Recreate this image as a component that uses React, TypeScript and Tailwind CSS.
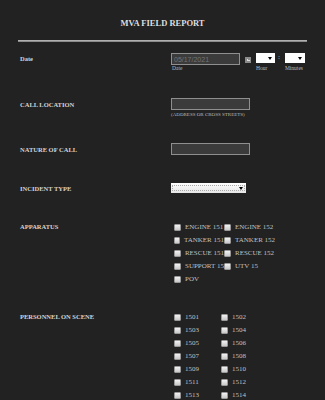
import React from "react";

const serif = { fontFamily: '"Liberation Serif", "Times New Roman", serif' };

function Check({ label, w }: { label: string; w: string }) {
  return (
    <div className={`flex items-center h-[13px] ${w}`}>
      <div className="w-[7px] h-[7px] bg-gradient-to-b from-[#f2f2f2] to-[#c9c9c9] border border-[#999] rounded-[1px]" />
      <span className="ml-[4px] text-[7px] text-[#c0c0c0] whitespace-nowrap leading-none">{label}</span>
    </div>
  );
}

function Arrow() {
  return <div className="w-0 h-0 border-l-[2px] border-r-[2px] border-t-[3px] border-l-transparent border-r-transparent border-t-black" />;
}

function Label({ children }: { children: React.ReactNode }) {
  return (
    <div className="w-[171px] shrink-0 pl-[20px] text-[6.5px] font-bold text-[#d4d4d4] leading-none">
      {children}
    </div>
  );
}

export default function App() {
  const apparatus = [
    ["ENGINE 151", "ENGINE 152"],
    ["TANKER 151", "TANKER 152"],
    ["RESCUE 151", "RESCUE 152"],
    ["SUPPORT 15", "UTV 15"],
    ["POV", ""],
  ];
  const personnel = [
    ["1501", "1502"],
    ["1503", "1504"],
    ["1505", "1506"],
    ["1507", "1508"],
    ["1509", "1510"],
    ["1511", "1512"],
    ["1513", "1514"],
  ];

  return (
    <div className="w-[325px] h-[400px] overflow-hidden bg-[#222222]" style={serif}>
      <div className="pt-[18px] text-center text-[8.5px] font-bold text-[#dedede] leading-[10px]">
        MVA FIELD REPORT
      </div>
      <div className="mx-[18px] mt-[12px] h-[2px] bg-[#8c8c8c] border-t border-[#b0b0b0]" />

      {/* Date */}
      <div className="flex mt-[11px] h-[45px]">
        <div className="w-[171px] shrink-0 pl-[20px] pt-[3px] text-[6.5px] font-bold text-[#d4d4d4] leading-none">Date</div>
        <div className="flex">
          <div className="flex flex-col">
            <div className="w-[69px] h-[12px] bg-[#3b3b3b] border border-[#8f8f8f] flex items-center pl-[2px]">
              <span className="text-[7px] text-[#737373] leading-none" style={{ fontFamily: '"Liberation Sans", Arial, sans-serif' }}>
                05/17/2021
              </span>
            </div>
            <span className="mt-[1px] ml-[1px] text-[5.5px] text-[#bdbdbd] leading-none">Date</span>
          </div>
          <div className="ml-[5px] mt-[4px] w-[6px] h-[6px] bg-[#8a8a8a] flex items-center justify-center">
            <div className="w-[3px] h-[2px] border-b border-l border-[#ddd]" />
          </div>
          <div className="flex flex-col ml-[5px]">
            <div className="w-[19px] h-[10px] bg-white flex items-center justify-end pr-[3px]">
              <Arrow />
            </div>
            <span className="mt-[3px] text-[5.5px] text-[#bdbdbd] leading-none">Hour</span>
          </div>
          <span className="mx-[3px] mt-[1px] text-[7px] text-[#bdbdbd] leading-none">:</span>
          <div className="flex flex-col ml-[2px]">
            <div className="w-[20px] h-[10px] bg-white flex items-center justify-end pr-[3px]">
              <Arrow />
            </div>
            <span className="mt-[3px] text-[5.5px] text-[#bdbdbd] leading-none">Minutes</span>
          </div>
        </div>
      </div>

      {/* Call location */}
      <div className="flex h-[45px]">
        <div className="pt-[4px]">
          <Label>CALL LOCATION</Label>
        </div>
        <div className="flex flex-col">
          <div className="w-[79px] h-[12px] bg-[#3b3b3b] border border-[#8f8f8f]" />
          <span className="mt-[2px] text-[5px] text-[#bdbdbd] leading-none whitespace-nowrap">(ADDRESS OR CROSS STREETS)</span>
        </div>
      </div>

      {/* Nature */}
      <div className="flex h-[40px]">
        <div className="pt-[4px]">
          <Label>NATURE OF CALL</Label>
        </div>
        <div className="w-[79px] h-[12px] bg-[#3b3b3b] border border-[#8f8f8f]" />
      </div>

      {/* Incident */}
      <div className="flex h-[38px]">
        <div className="pt-[3px]">
          <Label>INCIDENT TYPE</Label>
        </div>
        <div className="w-[75px] h-[10px] bg-gradient-to-b from-white to-[#e6e6e6] flex items-center px-[1px]">
          <div className="flex-1 h-[6px] border border-dotted border-[#aaa] flex items-center justify-end pr-[1px]">
            <Arrow />
          </div>
        </div>
      </div>

      {/* Apparatus */}
      <div className="flex">
        <div className="pt-[3px]">
          <Label>APPARATUS</Label>
        </div>
        <div className="flex flex-col pl-[3px]">
          {apparatus.map((r, i) => (
            <div key={i} className="flex">
              <Check label={r[0]} w="w-[50px]" />
              {r[1] && <Check label={r[1]} w="w-[60px]" />}
            </div>
          ))}
        </div>
      </div>

      {/* Personnel */}
      <div className="flex mt-[25px]">
        <div className="pt-[3px]">
          <Label>PERSONNEL ON SCENE</Label>
        </div>
        <div className="flex flex-col pl-[3px]">
          {personnel.map((r, i) => (
            <div key={i} className="flex">
              <Check label={r[0]} w="w-[47px]" />
              <Check label={r[1]} w="w-[40px]" />
            </div>
          ))}
        </div>
      </div>
    </div>
  );
}
